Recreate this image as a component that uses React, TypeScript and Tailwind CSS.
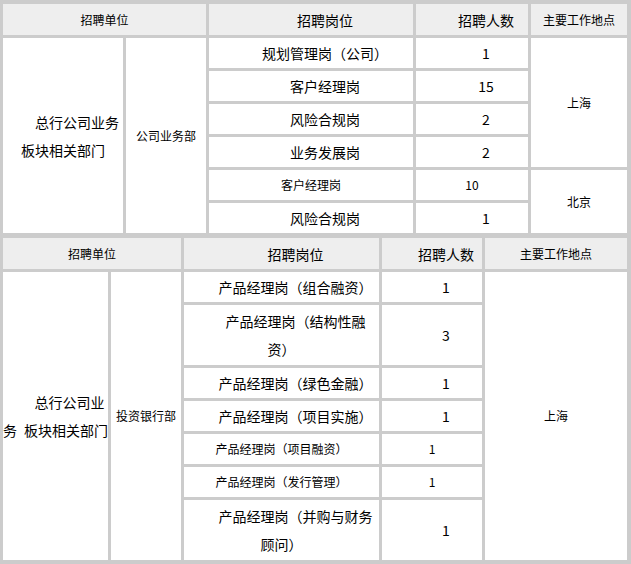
import React from 'react';

type CellProps = {
  children?: React.ReactNode;
  head?: boolean;
  big?: boolean;
  span?: string;
};

// one cell of the table; "big" cells use 14px text with a 2em first-line indent
function Cell({ children, head, big, span = '' }: CellProps) {
  return (
    <div className={`${head ? 'bg-[#eeeeee]' : 'bg-white'} flex items-center ${span}`}>
      <p
        className={`w-full text-center whitespace-nowrap leading-[28px] ${
          big ? 'text-[14px] indent-[28px]' : 'text-[12px]'
        }`}
      >
        {children}
      </p>
    </div>
  );
}

export default function App() {
  return (
    <div className="w-[631px] bg-[#cccccc] text-black font-['Noto_Sans_CJK_SC','Noto_Sans',sans-serif]">
      {/* 公司业务部 */}
      <div className="grid grid-cols-[120px_80px_204px_112px_1fr] grid-rows-[31px_repeat(6,30px)] gap-[3px] pl-[3px] pr-[4px] pt-[4px] pb-[3px]">
        <Cell head span="col-span-2">招聘单位</Cell>
        <Cell head big>招聘岗位</Cell>
        <Cell head big>招聘人数</Cell>
        <Cell head>主要工作地点</Cell>

        <Cell big span="row-span-6">
          总行公司业务
          <br />
          板块相关部门
        </Cell>
        <Cell span="row-span-6">公司业务部</Cell>
        <Cell big>规划管理岗（公司）</Cell>
        <Cell big>1</Cell>
        <Cell span="row-span-4">上海</Cell>
        <Cell big>客户经理岗</Cell>
        <Cell big>15</Cell>
        <Cell big>风险合规岗</Cell>
        <Cell big>2</Cell>
        <Cell big>业务发展岗</Cell>
        <Cell big>2</Cell>
        <Cell>客户经理岗</Cell>
        <Cell>10</Cell>
        <Cell span="row-span-2">北京</Cell>
        <Cell big>风险合规岗</Cell>
        <Cell big>1</Cell>
      </div>

      {/* 投资银行部 */}
      <div className="grid grid-cols-[105px_70px_195px_100px_1fr] grid-rows-[31px_30px_60px_30px_30px_30px_30px_60px] gap-[3px] pl-[3px] pr-[4px] pt-[2px] pb-[4px]">
        <Cell head span="col-span-2">招聘单位</Cell>
        <Cell head big>招聘岗位</Cell>
        <Cell head big>招聘人数</Cell>
        <Cell head>主要工作地点</Cell>

        <Cell big span="row-span-7">
          总行公司业
          <br />
          务{'\u2002'}板块相关部门
        </Cell>
        <Cell span="row-span-7">投资银行部</Cell>
        <Cell big>产品经理岗（组合融资）</Cell>
        <Cell big>1</Cell>
        <Cell span="row-span-7">上海</Cell>
        <Cell big>
          产品经理岗（结构性融
          <br />
          资）
        </Cell>
        <Cell big>3</Cell>
        <Cell big>产品经理岗（绿色金融）</Cell>
        <Cell big>1</Cell>
        <Cell big>产品经理岗（项目实施）</Cell>
        <Cell big>1</Cell>
        <Cell>产品经理岗（项目融资）</Cell>
        <Cell>1</Cell>
        <Cell>产品经理岗（发行管理）</Cell>
        <Cell>1</Cell>
        <Cell big>
          产品经理岗（并购与财务
          <br />
          顾问）
        </Cell>
        <Cell big>1</Cell>
      </div>
    </div>
  );
}
